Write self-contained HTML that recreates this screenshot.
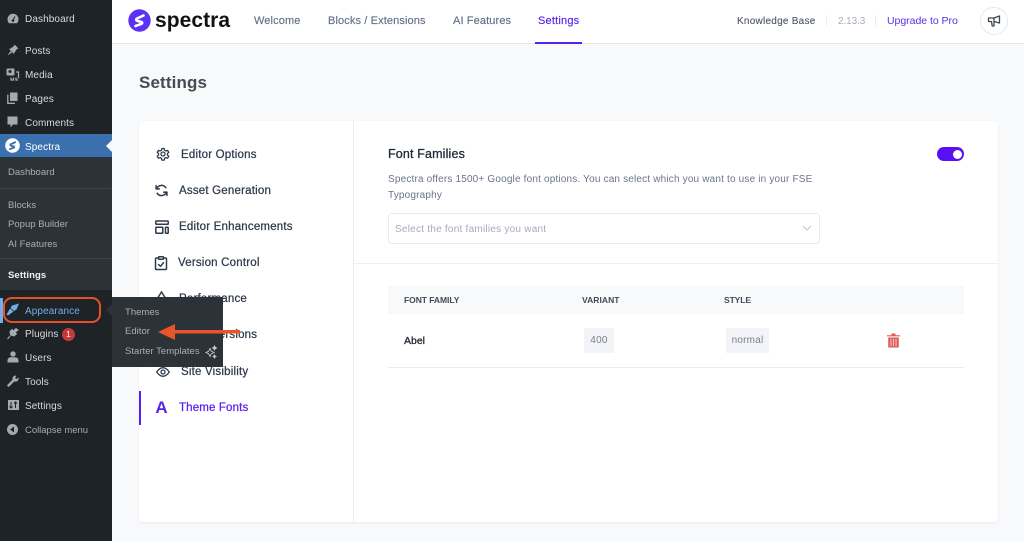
<!DOCTYPE html>
<html><head><meta charset="utf-8"><title>Spectra Settings</title>
<style>
*{box-sizing:border-box}
html,body{margin:0;padding:0}
body{width:1024px;height:541px;overflow:hidden;position:relative;background:#f8f9fb;font-family:"Liberation Sans",sans-serif}
.a{position:absolute}
.t{position:absolute;white-space:nowrap;line-height:16px;height:16px}
.w{color:#d8dadc;font-size:10px;letter-spacing:.1px}
.s{color:#a9afb5;font-size:9.5px;letter-spacing:.02px}
.n{color:#64708a;font-size:11px;letter-spacing:.12px;-webkit-text-stroke:.15px #64708a}
.m{color:#2f3a4d;font-size:11.5px;letter-spacing:.2px;-webkit-text-stroke:.25px #2f3a4d}
svg{position:absolute;overflow:visible}
</style></head><body>

<!-- header -->
<div class="a" style="left:112px;top:0;width:912px;height:44px;background:#fff;border-bottom:1px solid #e6e7ea"></div>
<svg style="left:128px;top:9px" width="23" height="23" viewBox="0 0 23 23"><circle cx="11.5" cy="11.5" r="11.2" fill="#5b32f5"/><path d="M15.5 6.5L9 9.5Q7.4 10.6 9 11.8L13.6 13Q14.8 13.8 13.6 14.8L7.5 17" fill="none" stroke="#fff" stroke-width="2.6" stroke-linecap="round" stroke-linejoin="round"/></svg>
<div class="t" style="left:155px;top:10px;height:22px;line-height:22px;font-size:21px;font-weight:700;color:#111;letter-spacing:.05px">spectra</div>
<div class="t n" style="left:254px;top:13px">Welcome</div>
<div class="t n" style="left:328px;top:13px">Blocks / Extensions</div>
<div class="t n" style="left:453px;top:13px">AI Features</div>
<div class="t" style="left:538px;top:13px;font-size:11px;letter-spacing:.2px;color:#5a20f0;-webkit-text-stroke:.15px #5a20f0">Settings</div>
<div class="a" style="left:535px;top:42px;width:47px;height:2px;background:#5a20f0"></div>
<div class="t" style="left:737px;top:14px;font-size:10px;letter-spacing:.25px;color:#4b5563;-webkit-text-stroke:.1px #4b5563">Knowledge Base</div>
<div class="a" style="left:826px;top:15px;width:1px;height:11px;background:#eceef1"></div>
<div class="t" style="left:838px;top:14px;font-size:10px;letter-spacing:-.1px;color:#a8aebc">2.13.3</div>
<div class="a" style="left:875px;top:15px;width:1px;height:11px;background:#eceef1"></div>
<div class="t" style="left:887px;top:13px;font-size:10.5px;letter-spacing:-.03px;color:#5a2ce8">Upgrade to Pro</div>
<div class="a" style="left:980px;top:7px;width:28px;height:28px;border:1px solid #e6e8ef;border-radius:50%;background:#fff"></div>
<svg style="left:987px;top:14px" width="14" height="14" viewBox="0 0 14 14" fill="none" stroke="#3f4654" stroke-width="1.3" stroke-linejoin="round"><path d="M1.5 4H7L12.5 2V9L7 7.5V12H5.2L4.5 7.5H1.5Z"/><path d="M7 4V7.5"/></svg>

<div class="t" style="left:139px;top:72px;height:22px;line-height:22px;font-size:17px;font-weight:700;color:#454a54;letter-spacing:.12px">Settings</div>

<!-- card -->
<div class="a" style="left:139px;top:121px;width:859px;height:401px;background:#fff;border-radius:4px;box-shadow:0 1px 2px rgba(30,40,70,.06)"></div>
<div class="a" style="left:353px;top:121px;width:1px;height:401px;background:#eceef0"></div>
<div class="a" style="left:354px;top:263px;width:644px;height:1px;background:#eeeff1"></div>

<!-- card nav -->
<svg style="left:155.5px;top:147px" width="14" height="14" viewBox="0 0 24 24" fill="none" stroke="#2f3a4d" stroke-width="2.2" stroke-linejoin="round"><path d="M10 2.5h4l.6 3 2.4 1.3 2.9-1 2 3.4-2.3 2v2.6l2.3 2-2 3.4-2.9-1-2.4 1.3-.6 3h-4l-.6-3L7 18.2l-2.900 1-2-3.400 2.300-2v-2.600l-2.300-2 2-3.400 2.900 1 2.400-1.300z"/><circle cx="12" cy="12" r="3.5"/></svg>
<div class="t m" style="left:181px;top:147px">Editor Options</div>
<svg style="left:155px;top:184px" width="13" height="13" viewBox="0 0 24 24" fill="none" stroke="#2f3a4d" stroke-width="2.8" stroke-linecap="round" stroke-linejoin="round"><path d="M2 3v6h6M22 21v-6h-6"/><path d="M3 9a9.5 9.5 0 0 1 17-2M21 15a9.5 9.5 0 0 1-17 2"/></svg>
<div class="t m" style="left:179px;top:183px">Asset Generation</div>
<svg style="left:155px;top:219.5px" width="14" height="14" viewBox="0 0 14 14" fill="none" stroke="#2f3a4d" stroke-width="1.5"><rect x=".8" y="1" width="12.4" height="3.3" rx=".5"/><rect x=".8" y="7.2" width="7" height="6" rx=".5"/><rect x="10.5" y="7.2" width="2.7" height="6" rx=".5"/></svg>
<div class="t m" style="left:179px;top:219px">Editor Enhancements</div>
<svg style="left:155px;top:256px" width="12" height="14" viewBox="0 0 12 14" fill="none" stroke="#2f3a4d" stroke-width="1.5" stroke-linecap="round" stroke-linejoin="round"><path d="M3.5 2H1.5a1 1 0 0 0-1 1v9.5a1 1 0 0 0 1 1h9a1 1 0 0 0 1-1V3a1 1 0 0 0-1-1H8.5"/><rect x="3.5" y=".7" width="5" height="2.6" rx=".8"/><path d="M3.500 8.500l2 1.800 3-3.600"/></svg>
<div class="t m" style="left:178px;top:255px">Version Control</div>
<svg style="left:155px;top:290px" width="14" height="12" viewBox="0 0 14 12" fill="none" stroke="#2f3a4d" stroke-width="1.5"><path d="M2 9L6.5 2L11 9"/></svg>
<div class="t m" style="left:179px;top:291px">Performance</div>
<div class="t m" style="left:179px;top:327px">Block Versions</div>
<svg style="left:156px;top:366.5px" width="14" height="10" viewBox="0 0 14 10" fill="none" stroke="#2f3a4d" stroke-width="1.3"><path d="M.7 5C3 1.800 5 .7 7 .7S11 1.800 13.300 5C11 8.200 9 9.300 7 9.300S3 8.200 .7 5Z"/><circle cx="7" cy="5" r="2"/></svg>
<div class="t m" style="left:181px;top:364px">Site Visibility</div>
<div class="a" style="left:139px;top:391px;width:2px;height:34px;background:#5a20f0"></div>
<div class="t" style="left:155px;top:399px;height:18px;line-height:18px;width:13px;text-align:center;font-weight:700;font-size:17px;color:#5a20f0">A</div>
<div class="t" style="left:179px;top:400px;font-size:11.5px;letter-spacing:.15px;color:#5a20f0;-webkit-text-stroke:.25px #5a20f0">Theme Fonts</div>

<!-- right panel -->
<div class="t" style="left:388px;top:146px;font-size:12.5px;letter-spacing:.15px;color:#1f2937;-webkit-text-stroke:.3px #1f2937">Font Families</div>
<div class="a" style="left:937px;top:147px;width:27px;height:14px;border-radius:7px;background:#5a10f5"></div>
<div class="a" style="left:953px;top:150px;width:9px;height:9px;border-radius:50%;background:#fff"></div>
<div class="t" style="left:388px;top:172px;font-size:10px;letter-spacing:.175px;color:#6b7488">Spectra offers 1500+ Google font options. You can select which you want to use in your FSE</div>
<div class="t" style="left:388px;top:188px;font-size:10px;letter-spacing:.175px;color:#6b7488">Typography</div>
<div class="a" style="left:388px;top:213px;width:432px;height:31px;border:1px solid #e8eaee;border-radius:4px;background:#fff"></div>
<div class="t" style="left:395px;top:222px;font-size:10px;letter-spacing:.24px;color:#a4abbb">Select the font families you want</div>
<svg style="left:802px;top:225px" width="10" height="7" viewBox="0 0 10 7" fill="none" stroke="#c3c7cf" stroke-width="1"><path d="M1 1l4 4 4-4"/></svg>

<!-- table -->
<div class="a" style="left:388px;top:286px;width:576px;height:28px;background:#f8f9fb"></div>
<div class="t" style="left:404px;top:292px;font-size:8.5px;font-weight:700;letter-spacing:-.05px;color:#434a59">FONT FAMILY</div>
<div class="t" style="left:582px;top:292px;font-size:8.5px;font-weight:700;letter-spacing:.05px;color:#434a59">VARIANT</div>
<div class="t" style="left:724px;top:292px;font-size:8.5px;font-weight:700;letter-spacing:-.1px;color:#434a59">STYLE</div>
<div class="t" style="left:404px;top:333px;font-size:10.5px;color:#262c38;-webkit-text-stroke:.3px #262c38">Abel</div>
<div class="a" style="left:584px;top:328px;width:30px;height:25px;background:#f2f4f8"></div>
<div class="t" style="left:584px;top:333px;width:30px;text-align:center;font-size:10px;letter-spacing:.3px;color:#7a808c">400</div>
<div class="a" style="left:726px;top:328px;width:43px;height:25px;background:#f2f4f8"></div>
<div class="t" style="left:726px;top:333px;width:43px;text-align:center;font-size:10px;letter-spacing:.2px;color:#7a808c">normal</div>
<svg style="left:887px;top:333px" width="13" height="15" viewBox="0 0 13 15"><path d="M0 2.200H13V3.400H0ZM4.500 .5H8.500V2.200H4.500Z" fill="#e05a5a"/><path d="M1.200 4.500H11.800V14.500H1.200Z" fill="#e25c5c"/><path d="M4 6V13M6.500 6V13M9 6V13" stroke="#f6c0c0" stroke-width="1"/></svg>
<div class="a" style="left:388px;top:367px;width:576px;height:1px;background:#e9eaec"></div>

<!-- sidebar -->
<div class="a" style="left:0;top:0;width:112px;height:541px;background:#1d2327"></div>
<div class="a" style="left:0;top:157px;width:112px;height:133px;background:#2c3338"></div>
<div class="a" style="left:0;top:134px;width:112px;height:23px;background:#3a70ae"></div>
<div class="a" style="left:106px;top:140px;width:0;height:0;border:6px solid transparent;border-left:0;border-right-color:#f8f9fb"></div>
<div class="a" style="left:0;top:188px;width:111px;height:1px;background:#3c4349"></div>
<div class="a" style="left:0;top:258px;width:111px;height:1px;background:#3c4349"></div>

<svg style="left:7px;top:13px" width="12" height="12" viewBox="0 0 12 12"><path d="M6 .8a5.500 5.500 0 0 0-5.500 5.500c0 1.400.5 2.800 1.400 3.900h8.200c.9-1.100 1.400-2.500 1.400-3.900A5.500 5.500 0 0 0 6 .8Z" fill="#a7aaad"/><circle cx="6" cy="7.500" r="1.300" fill="#1d2327"/><path d="M6 7L8 3.500" stroke="#1d2327"/></svg>
<div class="t w" style="left:25px;top:12px">Dashboard</div>
<svg style="left:7px;top:44px" width="12" height="12" viewBox="0 0 12 12"><path d="M7.500 .5L11.500 4.500 10 5 7.500 8.500 7 10 2 5 3.500 4.500 7 2Z M3.500 7L.5 11.500 5 8.500Z" fill="#a7aaad"/></svg>
<div class="t w" style="left:25px;top:44px">Posts</div>
<svg style="left:6px;top:68px" width="13" height="13" viewBox="0 0 13 13"><rect x=".5" y=".5" width="8" height="7" rx="1" fill="#a7aaad"/><circle cx="4" cy="3.500" r="1.500" fill="#1d2327"/><path d="M10 4h2.500v6.500M5 9.500v2.500h2.500V9.500M10 9.500v2.500h2" fill="none" stroke="#a7aaad" stroke-width="1.300"/></svg>
<div class="t w" style="left:25px;top:68px">Media</div>
<svg style="left:7px;top:92px" width="11" height="12" viewBox="0 0 11 12"><path d="M3 .5H10.500V9H3Z" fill="#a7aaad"/><path d="M.8 2.500V11.300H8" fill="none" stroke="#a7aaad" stroke-width="1.300"/></svg>
<div class="t w" style="left:25px;top:92px">Pages</div>
<svg style="left:7px;top:116px" width="11" height="12" viewBox="0 0 11 12"><path d="M.5 .5H10.500V8.500H6L3.500 11.500V8.500H.5Z" fill="#a7aaad"/></svg>
<div class="t w" style="left:25px;top:116px">Comments</div>
<svg style="left:5px;top:138px" width="15" height="15" viewBox="0 0 23 23"><circle cx="11.500" cy="11.500" r="11.200" fill="#fff"/><path d="M15.500 6.500L9 9.500Q7.400 10.600 9 11.800L13.600 13Q14.800 13.800 13.600 14.800L7.500 17" fill="none" stroke="#3a70ae" stroke-width="2.800" stroke-linecap="round" stroke-linejoin="round"/></svg>
<div class="t" style="left:25px;top:140px;font-size:10px;letter-spacing:.1px;color:#fff">Spectra</div>
<div class="t s" style="left:8px;top:165px">Dashboard</div>
<div class="t s" style="left:8px;top:198px">Blocks</div>
<div class="t s" style="left:8px;top:217px">Popup Builder</div>
<div class="t s" style="left:8px;top:237px">AI Features</div>
<div class="t" style="left:8px;top:268px;font-size:9.5px;font-weight:700;letter-spacing:.1px;color:#f0f0f1">Settings</div>

<div class="a" style="left:0;top:298px;width:3px;height:25px;background:#72aee6"></div>
<svg style="left:6px;top:303px" width="14" height="13" viewBox="0 0 14 13"><path d="M13 .5L6 2.500 4.500 5 8 8 10.500 6.500Z M4 5.500L.5 11.500 2 12.500 7.500 8.500Z" fill="#72aee6"/></svg>
<div class="t" style="left:25px;top:304px;font-size:10px;letter-spacing:.1px;color:#72aee6">Appearance</div>
<div class="a" style="left:3px;top:297px;width:98px;height:26px;border:2.5px solid #e8502a;border-radius:9px"></div>
<svg style="left:7px;top:328px" width="12" height="12" viewBox="0 0 12 12"><path d="M9 .5L6.500 3 5 1.500 3 3.500 3.500 7 7 8 9.500 6 8 4.500 11 2Z M3 8L.5 11" fill="#a7aaad" stroke="#a7aaad"/></svg>
<div class="t w" style="left:25px;top:327px">Plugins</div>
<div class="a" style="left:62px;top:328px;width:13px;height:13px;border-radius:50%;background:#c8383a;color:#fff;font-size:8.5px;line-height:13px;text-align:center">1</div>
<svg style="left:7px;top:351px" width="12" height="12" viewBox="0 0 12 12"><circle cx="6" cy="3" r="2.700" fill="#a7aaad"/><path d="M.5 11.500V9Q1 6.500 3.500 6.200H8.500Q11 6.500 11.500 9V11.500Z" fill="#a7aaad"/></svg>
<div class="t w" style="left:25px;top:351px">Users</div>
<svg style="left:7px;top:375px" width="12" height="12" viewBox="0 0 12 12"><path d="M1.500 10.500L7 5" stroke="#a7aaad" stroke-width="2.400" stroke-linecap="round"/><path d="M11.500 2.500L9.500 4 8 3 9.500 .7A3.200 3.200 0 0 0 5.500 4.500L7.500 6.500A3.200 3.200 0 0 0 11.500 2.500Z" fill="#a7aaad"/></svg>
<div class="t w" style="left:25px;top:375px">Tools</div>
<svg style="left:8px;top:400px" width="11" height="11" viewBox="0 0 11 11"><rect width="11" height="10" fill="#a7aaad"/><path d="M3 2v6M7.500 2v6M1.500 6.500L3 8 4.500 6.500M6 3.500L7.500 2 9 3.500" stroke="#1d2327" fill="none"/></svg>
<div class="t w" style="left:25px;top:399px">Settings</div>
<svg style="left:7px;top:424px" width="11" height="11" viewBox="0 0 11 11"><circle cx="5.500" cy="5.500" r="5.500" fill="#a7aaad"/><path d="M7 2.500V8.500L3 5.500Z" fill="#1d2327"/></svg>
<div class="t" style="left:25px;top:423px;font-size:9.5px;letter-spacing:-.03px;color:#a7aaad">Collapse menu</div>

<!-- flyout -->
<div class="a" style="left:112px;top:297px;width:111px;height:70px;background:#2c3338"></div>
<div class="a" style="left:106px;top:304px;width:0;height:0;border:6px solid transparent;border-left:0;border-right-color:#2c3338"></div>
<div class="t s" style="left:125px;top:305px">Themes</div>
<div class="t s" style="left:125px;top:324px">Editor</div>
<div class="t s" style="left:125px;top:344px">Starter Templates</div>
<svg style="left:205px;top:345px" width="12" height="13" viewBox="0 0 12 13" fill="none" stroke="#c5c8cb" stroke-width=".9"><path d="M5 3.500L6.300 6.200 9 7.500 6.300 8.800 5 11.500 3.700 8.800 1 7.500 3.700 6.200Z"/><path d="M9.500 1L10.200 2.300 11.500 3 10.200 3.700 9.500 5 8.800 3.700 7.500 3 8.800 2.300Z" fill="#c5c8cb"/><path d="M9.500 10L10 11 11 11.500 10 12 9.500 13 9 12 8 11.500 9 11Z" fill="#c5c8cb"/></svg>

<!-- arrow -->
<svg style="left:158px;top:322px" width="84" height="20" viewBox="0 0 84 20"><path d="M0 10L17 2V8H82V11.500H17V18Z" fill="#e9552b"/></svg>
</body></html>
